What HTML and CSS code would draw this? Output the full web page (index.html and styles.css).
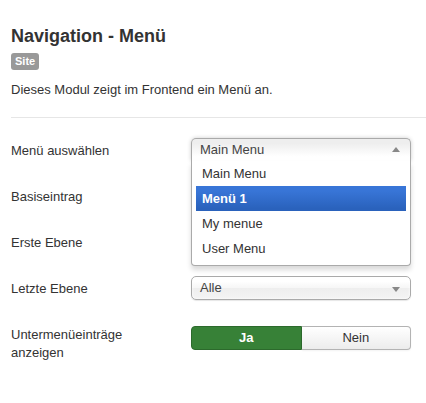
FILE: index.html
```html
<!DOCTYPE html>
<html lang="de">
<head>
  <meta charset="UTF-8">
  <meta name="viewport" content="width=device-width, initial-scale=1.0">
  <title>Navigation - Menü</title>
<link rel="stylesheet" href="styles.css">
</head>
<body>
  <div class="module-info">
    <h2 class="module-title">Navigation - Menü</h2>
    <span class="badge">Site</span>
    <p class="module-desc">Dieses Modul zeigt im Frontend ein Menü an.</p>
  </div>
  <hr class="divider">

  <div class="form-horizontal">
    <div class="control-group">
      <label class="control-label">Menü auswählen</label>
      <div class="controls">
        <div class="chosen chosen-open">
          <div class="chosen-single">
            <span>Main Menu</span>
            <b class="arrow arrow-up"></b>
          </div>
          <!-- the open list lies over the next rows -->
          <div class="chosen-drop">
            <ul class="chosen-results">
              <li>Main Menu</li>
              <li class="highlighted">Menü 1</li>
              <li>My menue</li>
              <li>User Menu</li>
            </ul>
          </div>
        </div>
      </div>
    </div>

    <!-- these two selects are covered by the open list -->
    <div class="control-group">
      <label class="control-label">Basiseintrag</label>
      <div class="controls">
        <div class="chosen">
          <div class="chosen-single"><b class="arrow"></b></div>
        </div>
      </div>
    </div>

    <div class="control-group">
      <label class="control-label">Erste Ebene</label>
      <div class="controls">
        <div class="chosen">
          <div class="chosen-single"><b class="arrow"></b></div>
        </div>
      </div>
    </div>

    <div class="control-group">
      <label class="control-label">Letzte Ebene</label>
      <div class="controls">
        <div class="chosen">
          <div class="chosen-single"><span>Alle</span><b class="arrow"></b></div>
        </div>
      </div>
    </div>

    <div class="control-group">
      <label class="control-label">Untermenüeinträge anzeigen</label>
      <div class="controls">
        <div class="btn-group">
          <span class="btn btn-yes">Ja</span>
          <span class="btn btn-no">Nein</span>
        </div>
      </div>
    </div>
  </div>
</body>
</html>
```

FILE: styles.css
```css
body {
  margin: 0;
  background-color: #fff;
  color: #333;
  font-family: "Liberation Sans", Arial, sans-serif;
  font-size: 13px;
  line-height: 18px;
}

.module-info {
  padding: 25px 0 0 11px;
}

.module-title {
  margin: 0;
  font-size: 18px;
  line-height: 22px;
  font-weight: bold;
  color: #333;
}

.badge {
  display: inline-block;
  margin-top: 6px;
  padding: 0 4px;
  height: 17px;
  line-height: 17px;
  background-color: #999;
  color: #fff;
  font-size: 11px;
  font-weight: bold;
  border-radius: 3px;
}

.module-desc {
  margin: 11px 0 0 0;
}

/* grey line with white under it, like bootstrap hr */
.divider {
  margin: 18px 0 19px 11px;
  border: 0;
  border-top: 1px solid #e6e6e6;
  border-bottom: 1px solid #fff;
}

.form-horizontal {
  padding-left: 11px;
}

.control-group {
  display: flex;
  height: 46px;
}

.control-label {
  width: 160px;
  margin-right: 20px;
  padding-top: 4px;
}

.controls {
  width: 220px;
}

/* chosen style select */
.chosen {
  position: relative;
}

.chosen-single {
  position: relative;
  box-sizing: border-box;
  height: 24px;
  padding-left: 8px;
  line-height: 22px;
  color: #444;
  border: 1px solid #aaa;
  border-radius: 5px;
  background: linear-gradient(#fff 20%, #f6f6f6 50%, #eee 52%, #f4f4f4 100%);
  box-shadow: 0 0 3px #fff inset, 0 1px 1px rgba(0, 0, 0, 0.1);
}

.arrow {
  position: absolute;
  top: 10px;
  right: 10px;
  width: 0;
  height: 0;
  border: 4px solid transparent;
  border-bottom: 0;
  border-top: 5px solid #888;
}

.chosen-open {
  z-index: 10;
}

.chosen-open .chosen-single {
  height: 23px;
  border-bottom: 0;
  border-radius: 5px 5px 0 0;
  background: linear-gradient(#eee 20%, #fff 80%);
  box-shadow: 0 0 4px rgba(0, 0, 0, 0.2);
}

.arrow-up {
  top: 8px;
  border-top: 0;
  border-bottom: 5px solid #888;
}

.chosen-drop {
  position: absolute;
  top: 100%;
  left: 0;
  right: 0;
  background-color: #fff;
  border: 1px solid #aaa;
  border-top: 0;
  border-radius: 0 0 4px 4px;
  box-shadow: 0 4px 5px rgba(0, 0, 0, 0.15);
}

.chosen-results {
  list-style: none;
  margin: 0 4px 4px 0;
  padding: 0 0 0 4px;
}

.chosen-results li {
  padding: 5px 6px;
  line-height: 15px;
  color: #333;
}

.chosen-results li.highlighted {
  background: linear-gradient(#3875d7 20%, #2a62bc 90%);
  color: #fff;
  font-weight: bold;
}

/* yes / no switch */
.btn-group {
  display: flex;
  margin-top: 4px;
}

.btn {
  flex: 1;
  box-sizing: border-box;
  height: 24px;
  line-height: 22px;
  text-align: center;
  border: 1px solid #b3b3b3;
}

.btn-yes {
  background-color: #378137;
  border-color: #2c6a2c;
  color: #fff;
  font-weight: bold;
  border-radius: 4px 0 0 4px;
}

.btn-no {
  background: linear-gradient(#fff, #ececec);
  border-left: 0;
  color: #333;
  border-radius: 0 4px 4px 0;
  box-shadow: 0 1px 2px rgba(0, 0, 0, 0.05);
}
```
